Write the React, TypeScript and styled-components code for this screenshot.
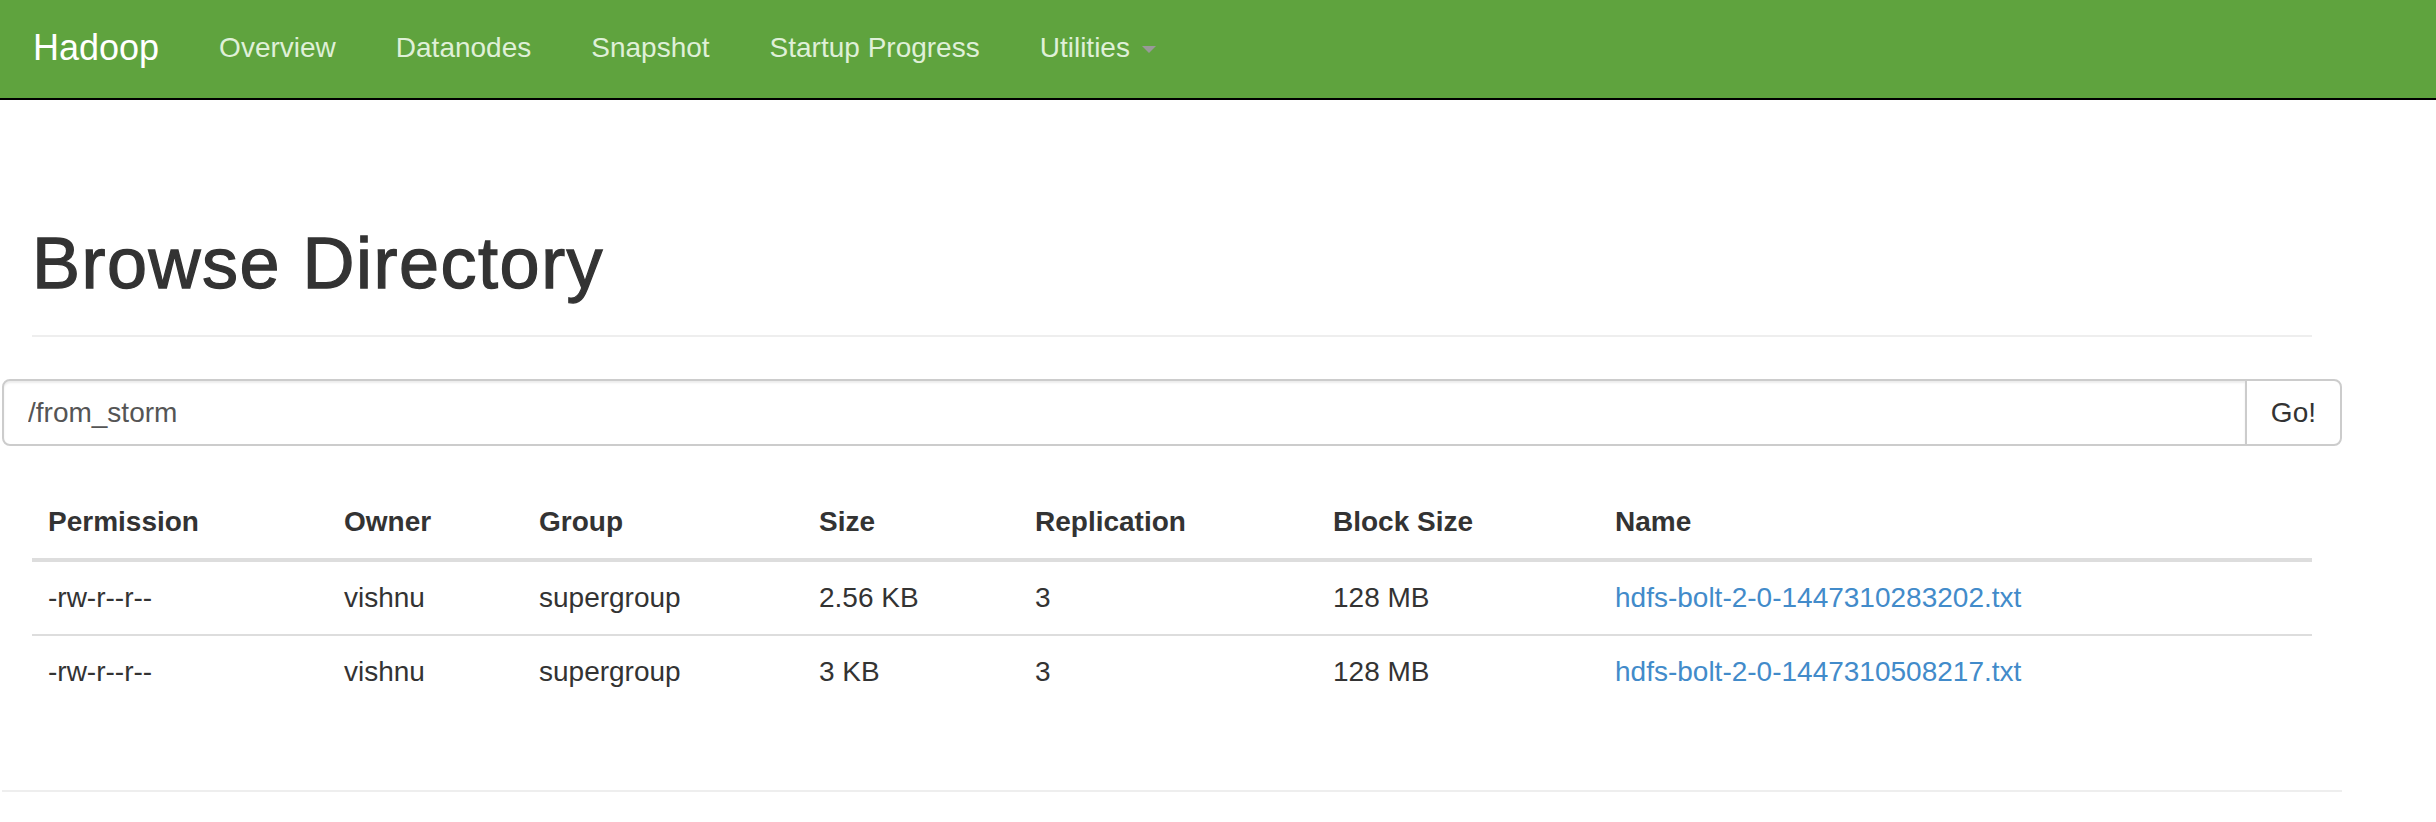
import React from "react";
import styled, { createGlobalStyle } from "styled-components";

const GlobalStyle = createGlobalStyle`
  html, body {
    margin: 0;
    padding: 0;
    background: #fff;
  }
  body {
    font-family: "Liberation Sans", Arial, Helvetica, sans-serif;
    font-size: 28px;
    line-height: 40px;
    color: #333;
  }
  * { box-sizing: border-box; }
`;

const NavBar = styled.header`
  display: flex;
  align-items: flex-start;
  height: 100px;
  padding-left: 3px;
  background: #5fa33e;
  border-bottom: 2px solid #000;
`;

const Brand = styled.div`
  padding: 28px 30px 30px;
  font-size: 36px;
  line-height: 40px;
  color: #fff;
`;

const NavList = styled.ul`
  display: flex;
  margin: 0;
  padding: 0;
  list-style: none;
`;

const NavLink = styled.a`
  display: block;
  padding: 28px 30px 30px;
  font-size: 28px;
  line-height: 40px;
  color: #dff0d8;
  text-decoration: none;
  white-space: nowrap;
`;

const Caret = styled.span`
  display: inline-block;
  width: 0;
  height: 0;
  margin-left: 4px;
  vertical-align: middle;
  border-top: 7px solid #999;
  border-left: 7px solid transparent;
  border-right: 7px solid transparent;
`;

const Container = styled.main`
  width: 2340px;
  margin-left: 2px;
  padding: 0 30px;
`;

const PageHeader = styled.div`
  margin: 124px 0 42px;
  padding-bottom: 32px;
  border-bottom: 2px solid #eee;
`;

const Title = styled.h1`
  margin: 0;
  font-size: 72px;
  line-height: 79px;
  font-weight: 400;
  letter-spacing: 1.5px;
  color: #333;
  -webkit-text-stroke: 1.3px #333;
`;

const SearchForm = styled.form`
  display: flex;
  margin: 0 -30px;
`;

const PathInput = styled.input`
  flex: 1;
  height: 67px;
  margin: 0;
  padding: 0 24px;
  font-family: inherit;
  font-size: 28px;
  color: #555;
  background: #fff;
  border: 2px solid #ccc;
  border-radius: 8px 0 0 8px;
  box-shadow: inset 0 2px 2px rgba(0, 0, 0, 0.075);
  outline: none;
`;

const GoButton = styled.button`
  height: 67px;
  margin: 0 0 0 -2px;
  padding: 0 24px;
  font-family: inherit;
  font-size: 28px;
  line-height: 40px;
  color: #333;
  background: #fff;
  border: 2px solid #ccc;
  border-radius: 0 8px 8px 0;
`;

const Table = styled.table`
  width: 100%;
  margin: 40px 0 40px;
  border-collapse: collapse;
  border-spacing: 0;
  table-layout: fixed;
`;

const HeadCell = styled.th<{ $w: number }>`
  width: ${(p) => p.$w}px;
  padding: 16px;
  text-align: left;
  font-weight: 700;
  line-height: 40px;
  border-bottom: 4px solid #ddd;
`;

const Cell = styled.td`
  padding: 16px;
  line-height: 40px;
  border-top: 2px solid #ddd;
  white-space: nowrap;
`;

const FileLink = styled.a`
  color: #428bca;
  text-decoration: none;
`;

const Footer = styled.div`
  display: flow-root;
  margin: 0 -30px;
`;

const Rule = styled.hr`
  margin: 42px 0 0;
  border: 0;
  border-top: 2px solid #eee;
`;

const columns = [
  { label: "Permission", w: 296 },
  { label: "Owner", w: 195 },
  { label: "Group", w: 280 },
  { label: "Size", w: 216 },
  { label: "Replication", w: 298 },
  { label: "Block Size", w: 282 },
  { label: "Name", w: 713 },
];

const files = [
  {
    perm: "-rw-r--r--",
    owner: "vishnu",
    group: "supergroup",
    size: "2.56 KB",
    repl: "3",
    block: "128 MB",
    name: "hdfs-bolt-2-0-1447310283202.txt",
  },
  {
    perm: "-rw-r--r--",
    owner: "vishnu",
    group: "supergroup",
    size: "3 KB",
    repl: "3",
    block: "128 MB",
    name: "hdfs-bolt-2-0-1447310508217.txt",
  },
];

const navItems = ["Overview", "Datanodes", "Snapshot", "Startup Progress"];

export default function App() {
  return (
    <>
      <GlobalStyle />
      <NavBar>
        <Brand>Hadoop</Brand>
        <NavList>
          {navItems.map((item) => (
            <li key={item}>
              <NavLink href="#">{item}</NavLink>
            </li>
          ))}
          <li>
            <NavLink href="#">
              Utilities <Caret />
            </NavLink>
          </li>
        </NavList>
      </NavBar>
      <Container>
        <PageHeader>
          <Title>Browse Directory</Title>
        </PageHeader>
        <SearchForm onSubmit={(e) => e.preventDefault()}>
          <PathInput type="text" defaultValue="/from_storm" />
          <GoButton type="submit">Go!</GoButton>
        </SearchForm>
        <Table>
          <thead>
            <tr>
              {columns.map((c) => (
                <HeadCell key={c.label} $w={c.w}>
                  {c.label}
                </HeadCell>
              ))}
            </tr>
          </thead>
          <tbody>
            {files.map((f) => (
              <tr key={f.name}>
                <Cell>{f.perm}</Cell>
                <Cell>{f.owner}</Cell>
                <Cell>{f.group}</Cell>
                <Cell>{f.size}</Cell>
                <Cell>{f.repl}</Cell>
                <Cell>{f.block}</Cell>
                <Cell>
                  <FileLink href="#">{f.name}</FileLink>
                </Cell>
              </tr>
            ))}
          </tbody>
        </Table>
        <Footer>
          <Rule />
        </Footer>
      </Container>
    </>
  );
}
